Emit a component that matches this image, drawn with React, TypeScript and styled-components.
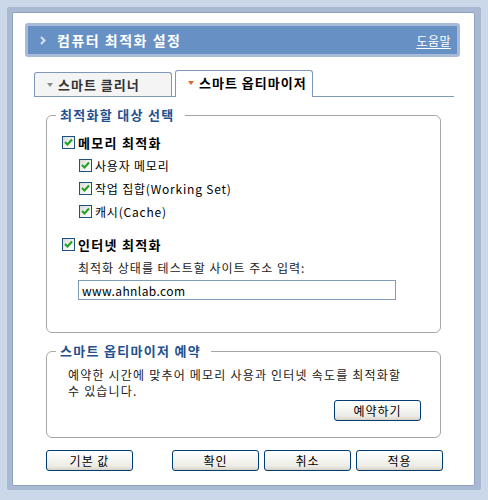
import styled, { createGlobalStyle } from "styled-components";

const GlobalStyle = createGlobalStyle`
	html, body {
		margin: 0;
		padding: 0;
		background: #cbd8e9;
	}
	body {
		font-family: "Noto Sans CJK KR", "Noto Sans", sans-serif;
		font-size: 12px;
		letter-spacing: 1px;
		color: #000;
	}
`;

const Page = styled.div`
	width: 488px;
	height: 500px;
	box-sizing: border-box;
	padding: 7px 7px 10px 7px;
	background: #cbd8e9;
`;

const Frame = styled.div`
	height: 100%;
	box-sizing: border-box;
	padding: 5px 6px 4px 5px;
	background: #a9b9d2;
	border-radius: 2px;
`;

const Panel = styled.div`
	height: 100%;
	box-sizing: border-box;
	background: #fff;
	border: 1px solid #8ea2c1;
	border-radius: 2px;
	padding: 10px 14px 0 12px;
`;

const TitleBar = styled.div`
	display: flex;
	align-items: center;
	height: 34px;
	box-sizing: border-box;
	border: 3px solid #a7bad8;
	border-radius: 3px;
	background: #6790c4;
	padding: 0 6px 0 12px;
	color: #fff;
`;

const Title = styled.h1`
	margin: 0 0 0 11px;
	font-size: 14px;
	font-weight: 700;
	line-height: 18px;
	letter-spacing: 1.5px;
`;

const HelpLink = styled.a`
	margin-left: auto;
	color: #fff;
	font-size: 12px;
	letter-spacing: 0.5px;
	text-decoration: underline;
	text-underline-offset: 2px;
	cursor: pointer;
`;

const Tabs = styled.div`
	display: flex;
	align-items: flex-end;
	gap: 3px;
	height: 27px;
	box-sizing: border-box;
	margin: 13px 6px 0 9px;
	border-bottom: 1px solid #7f98b9;
`;

const Tab = styled.div<{ $active?: boolean }>`
	display: flex;
	align-items: center;
	gap: 5px;
	width: 138px;
	height: ${(p) => (p.$active ? 27 : 24)}px;
	margin-bottom: ${(p) => (p.$active ? -1 : 0)}px;
	box-sizing: border-box;
	padding: ${(p) => (p.$active ? "0 0 2px 12px" : "0 0 0 12px")};
	border: 1px solid #7f98b9;
	border-bottom: none;
	border-radius: 3px 3px 0 0;
	background: ${(p) => (p.$active ? "#fff" : "#f4f4f4")};
	color: ${(p) => (p.$active ? "#000" : "#333")};
	font-size: 13px;
	font-weight: 700;
	line-height: 16px;
`;

const Arrow = styled.span<{ $color: string }>`
	width: 0;
	height: 0;
	border-left: 3px solid transparent;
	border-right: 3px solid transparent;
	border-top: 4px solid ${(p) => p.$color};
`;

const Body = styled.div`
	padding: 0 19px 0 21px;
`;

const GroupBox = styled.fieldset<{ $pad: string }>`
	margin: 10px 0 0;
	min-width: 0;
	padding: ${(p) => p.$pad};
	border: 1px solid #a6a6a6;
	border-radius: 6px;
`;

const Legend = styled.legend`
	margin-left: -6px;
	padding: 0 10px 0 4px;
	color: #24508e;
	font-size: 13px;
	font-weight: 700;
	line-height: 16px;
	letter-spacing: 1.3px;
`;

const CheckRow = styled.label<{ $indent?: number; $gap?: number }>`
	display: flex;
	align-items: center;
	height: 23px;
	margin-left: ${(p) => p.$indent ?? 0}px;
	margin-top: ${(p) => p.$gap ?? 0}px;
`;

const Box = styled.span`
	display: inline-flex;
	align-items: center;
	justify-content: center;
	width: 13px;
	height: 13px;
	box-sizing: border-box;
	border: 1px solid #1c5180;
	background: linear-gradient(135deg, #dcdcd7 0%, #f6f6f3 70%, #fff 100%);
`;

const CheckText = styled.span<{ $bold?: boolean }>`
	margin-left: 3px;
	font-size: ${(p) => (p.$bold ? 13 : 12)}px;
	font-weight: ${(p) => (p.$bold ? 700 : 400)};
	line-height: 16px;
	letter-spacing: ${(p) => (p.$bold ? 1.3 : 0.8)}px;
`;

const Hint = styled.div`
	margin: 4px 0 0 16px;
	line-height: 16px;
	color: #222;
`;

const UrlInput = styled.input`
	display: block;
	width: 318px;
	height: 20px;
	box-sizing: border-box;
	margin: 4px 0 0 16px;
	padding: 0 3px;
	border: 1px solid #7f9db9;
	font-family: inherit;
	font-size: 12px;
	letter-spacing: 0.4px;
	color: #000;
	outline: none;
`;

const Desc = styled.p`
	margin: 0 0 0 6px;
	line-height: 16px;
	letter-spacing: 1.2px;
	color: #222;
`;

const ButtonRow = styled.div<{ $top: number }>`
	display: flex;
	justify-content: flex-end;
	gap: 5px;
	margin-top: ${(p) => p.$top}px;
	padding-right: 4px;
`;

const Footer = styled.div`
	display: flex;
	gap: 5px;
	margin: 12px -2px 0 0;
`;

const Button = styled.button<{ $push?: boolean }>`
	width: 87px;
	height: 21px;
	margin-left: ${(p) => (p.$push ? "auto" : "0")};
	padding: 0;
	box-sizing: border-box;
	border: 1px solid #003c74;
	border-radius: 3px;
	background: linear-gradient(#ffffff 0%, #f5f5f1 45%, #ecebe4 80%, #d8d3c6 100%);
	font-family: inherit;
	font-size: 12px;
	letter-spacing: 1px;
	line-height: 16px;
	color: #000;
`;

function Check() {
	return (
		<Box>
			<svg width="9" height="9" viewBox="0 0 9 9">
				<polyline points="1,4 3.5,6.5 8,1.5" fill="none" stroke="#21a121" strokeWidth="2" />
			</svg>
		</Box>
	);
}

function Chevron() {
	return (
		<svg width="6" height="9" viewBox="0 0 6 9">
			<polyline points="1,1 4.5,4.5 1,8" fill="none" stroke="#d6e2f2" strokeWidth="2" />
		</svg>
	);
}

function App() {
	return (
		<Page>
			<GlobalStyle />
			<Frame>
				<Panel>
					<TitleBar>
						<Chevron />
						<Title>컴퓨터 최적화 설정</Title>
						<HelpLink>도움말</HelpLink>
					</TitleBar>
					<Tabs>
						<Tab>
							<Arrow $color="#8a8a8a" />
							스마트 클리너
						</Tab>
						<Tab $active>
							<Arrow $color="#e8602c" />
							스마트 옵티마이저
						</Tab>
					</Tabs>
					<Body>
						<GroupBox $pad="8px 15px 32px">
							<Legend>최적화할 대상 선택</Legend>
							<CheckRow>
								<Check />
								<CheckText $bold>메모리 최적화</CheckText>
							</CheckRow>
							<CheckRow $indent={17}>
								<Check />
								<CheckText>사용자 메모리</CheckText>
							</CheckRow>
							<CheckRow $indent={17}>
								<Check />
								<CheckText>작업 집합(Working Set)</CheckText>
							</CheckRow>
							<CheckRow $indent={17}>
								<Check />
								<CheckText>캐시(Cache)</CheckText>
							</CheckRow>
							<CheckRow $gap={10}>
								<Check />
								<CheckText $bold>인터넷 최적화</CheckText>
							</CheckRow>
							<Hint>최적화 상태를 테스트할 사이트 주소 입력:</Hint>
							<UrlInput defaultValue="www.ahnlab.com" />
						</GroupBox>
						<GroupBox $pad="8px 15px 16px">
							<Legend>스마트 옵티마이저 예약</Legend>
							<Desc>
								예약한 시간에 맞추어 메모리 사용과 인터넷 속도를 최적화할
								<br />수 있습니다.
							</Desc>
							<ButtonRow $top={1}>
								<Button>예약하기</Button>
							</ButtonRow>
						</GroupBox>
						<Footer>
							<Button>기본 값</Button>
							<Button $push>확인</Button>
							<Button>취소</Button>
							<Button>적용</Button>
						</Footer>
					</Body>
				</Panel>
			</Frame>
		</Page>
	);
}

export default App;
